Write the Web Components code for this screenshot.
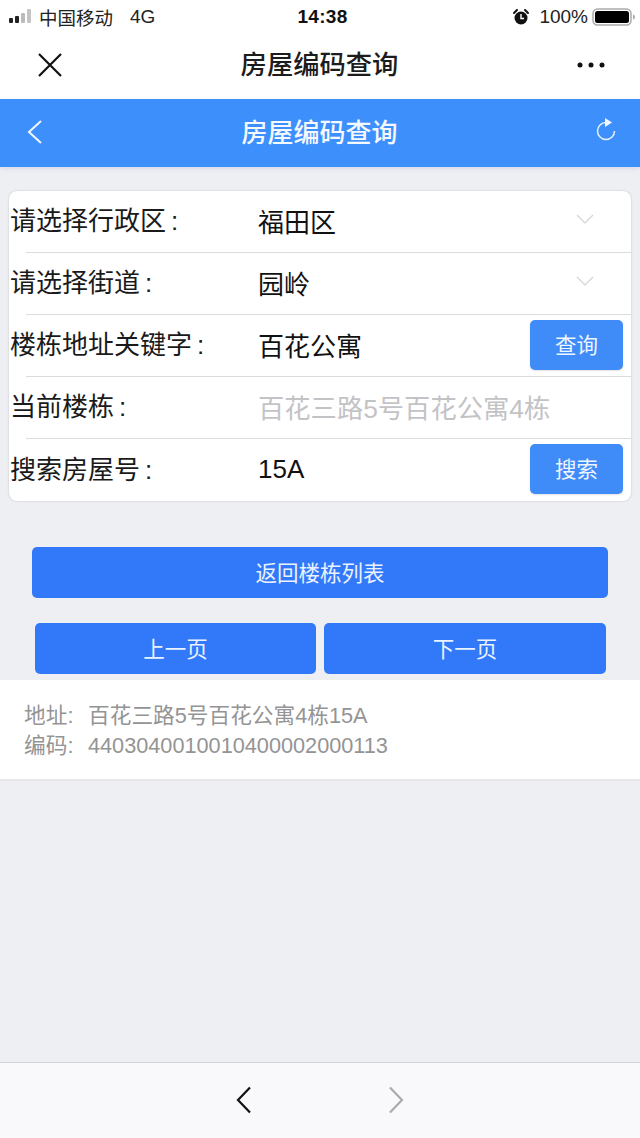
<!DOCTYPE html>
<html lang="zh">
<head>
<meta charset="utf-8">
<title>房屋编码查询</title>
<style>
html,body{margin:0;padding:0;}
body{width:640px;height:1138px;overflow:hidden;background:#eeeff2;font-family:"Liberation Sans","Noto Sans CJK SC",sans-serif;}
#page{display:flex;flex-direction:column;height:1138px;}
</style>
</head>
<body>
<div id="page">
  <status-bar></status-bar>
  <wx-nav>房屋编码查询</wx-nav>
  <app-header>房屋编码查询</app-header>
  <form-card>
    <field-row label="请选择行政区" value="福田区" arrow></field-row>
    <field-row label="请选择街道" value="园岭" arrow></field-row>
    <field-row label="楼栋地址关键字" value="百花公寓" button="查询"></field-row>
    <field-row label="当前楼栋" value="百花三路5号百花公寓4栋" muted></field-row>
    <field-row label="搜索房屋号" value="15A" button="搜索" last></field-row>
  </form-card>
  <page-actions></page-actions>
  <info-panel>
    <info-line label="地址">百花三路5号百花公寓4栋15A</info-line>
    <info-line label="编码">4403040010010400002000113</info-line>
  </info-panel>
  <browser-bar></browser-bar>
</div>
<script>
class StatusBar extends HTMLElement{
    connectedCallback(){
        this.attachShadow({mode:"open"}).innerHTML=`
        <style>
        :host{display:flex;align-items:center;justify-content:space-between;height:32px;background:#fff;color:#222;font-size:18px;box-sizing:border-box;padding:1px 4px 0 9px;}
        .left,.right{display:flex;align-items:center;width:200px;}
        .right{justify-content:flex-end;}
        .net{margin-left:17px;font-size:19px;}
        .time{font-weight:bold;font-size:19px;letter-spacing:.3px;color:#111;}
        svg{display:block;}
        .carrier{margin-left:4px;font-size:18.500px;}
        .pct{margin:0 4px 0 9px;font-size:19px;}
        </style>
        <div class="left">
            <svg width="26" height="18" viewBox="0 0 26 18">
                <rect x="0" y="10" width="4" height="5" rx="1" fill="#222"/>
                <rect x="6" y="8" width="4" height="7" rx="1" fill="#222"/>
                <rect x="12" y="5" width="4" height="10" rx="1" fill="#bbb"/>
                <rect x="18" y="1" width="4" height="14" rx="1" fill="#c4c4c4"/>
            </svg>
            <span class="carrier">中国移动</span><span class="net">4G</span>
        </div>
        <div class="time">14:38</div>
        <div class="right">
            <svg width="18" height="18" viewBox="0 0 18 18">
                <circle cx="9" cy="10" r="6.500" fill="#111"/>
                <path d="M9 6v4.500h3" fill="none" stroke="#fff" stroke-width="1.400"/>
                <path d="M2 5l3-3M16 5l-3-3" stroke="#111" stroke-width="2" stroke-linecap="round"/>
            </svg>
            <span class="pct">100%</span>
            <svg width="44" height="20" viewBox="0 0 44 20">
                <rect x="1" y="2" width="38" height="16" rx="4.500" fill="none" stroke="#aaa" stroke-width="1.500"/>
                <rect x="3" y="4" width="34" height="12" rx="2.500" fill="#000"/>
                <path d="M41 7.500c1.500.4 2 1.300 2 2.500s-.5 2.100-2 2.500z" fill="#aaa"/>
            </svg>
        </div>`;
    }
}

class WxNav extends HTMLElement{
    connectedCallback(){
        this.attachShadow({mode:"open"}).innerHTML=`
        <style>
        :host{display:flex;align-items:center;justify-content:space-between;height:67px;background:#fff;padding:0 34px 2px 37px;box-sizing:border-box;}
        .title{font-size:26.300px;font-weight:500;color:#1c1c1c;position:relative;top:-2px;}
        svg{display:block;}
        </style>
        <svg width="26" height="26" viewBox="0 0 26 26"><path d="M2 2l22 22M24 2L2 24" stroke="#111" stroke-width="2.200" fill="none"/></svg>
        <div class="title"><slot></slot></div>
        <svg width="30" height="8" viewBox="0 0 30 8"><circle cx="4" cy="4" r="2.500" fill="#111"/><circle cx="15" cy="4" r="2.500" fill="#111"/><circle cx="26" cy="4" r="2.500" fill="#111"/></svg>`;
    }
}

class AppHeader extends HTMLElement{
    connectedCallback(){
        this.attachShadow({mode:"open"}).innerHTML=`
        <style>
        :host{display:flex;align-items:center;justify-content:space-between;height:68px;background:#3d8ffb;color:#fff;padding:0 23px 0 26px;box-sizing:border-box;box-shadow:0 2px 4px rgba(120,140,190,.18);}
        .title{font-size:26px;font-weight:500;color:#f4f8ff;position:relative;top:-3px;}
        svg{display:block;}
        .back{position:relative;top:-1px;}
        .reload{position:relative;top:-3px;}
        </style>
        <svg class="back" width="18" height="28" viewBox="0 0 18 28"><path d="M15 3L3 14l12 11" fill="none" stroke="#f2f6ff" stroke-width="2"/></svg>
        <div class="title"><slot></slot></div>
        <svg class="reload" width="22" height="26" viewBox="0 0 22 26">
            <path d="M11 5.500a8.500 8.500 0 1 0 8.500 8.500" fill="none" stroke="#e8f1ff" stroke-width="1.500"/>
            <path d="M10 1l7 4.500-7 4.500z" fill="#f2f6ff"/>
        </svg>`;
    }
}

class FormCard extends HTMLElement{
    connectedCallback(){
        this.attachShadow({mode:"open"}).innerHTML=`
        <style>
        :host{display:block;margin:24px 9px 0;background:#fff;border-radius:8px;box-shadow:0 0 2px rgba(0,0,0,.22);}
        </style>
        <slot></slot>`;
    }
}

class FieldRow extends HTMLElement{
    connectedCallback(){
        const button=this.getAttribute("button");
        const trailing=button
            ?`<button>${button}</button>`
            :this.hasAttribute("arrow")
                ?`<svg class="arrow" width="18" height="11" viewBox="0 0 18 11"><path d="M1 1l8 8 8-8" fill="none" stroke="#d4d4d8" stroke-width="1.200"/></svg>`
                :"";
        this.attachShadow({mode:"open"}).innerHTML=`
        <style>
        :host{display:block;}
        .row{display:flex;align-items:center;height:61px;box-sizing:border-box;padding:0 8px 0 1px;}
        :host([last]) .row{height:62px;}
        .divider{height:1px;background:#dcdcdf;margin-left:17px;}
        .label{width:248px;font-size:26px;color:#1a1a1a;position:relative;top:-3px;white-space:nowrap;}
        .label i{font-style:normal;margin-left:5px;}
        .value{flex:1;font-size:26px;color:#111;white-space:nowrap;position:relative;top:-1px;}
        :host([muted]) .value{color:#c3c3c6;font-size:26.300px;}
        .arrow{display:block;margin-right:29px;position:relative;top:-2px;}
        button{width:93px;height:50px;margin-top:-2px;border:0;border-radius:5px;background:#3f8bf8;color:#eef5ff;font:21.500px "Liberation Sans","Noto Sans CJK SC",sans-serif;padding:0 0 3px;box-shadow:0 1px 2px rgba(0,0,0,.12);}
        </style>
        <div class="row">
            <div class="label">${this.getAttribute("label")}<i>:</i></div>
            <div class="value">${this.getAttribute("value")}</div>
            ${trailing}
        </div>
        ${this.hasAttribute("last")?"":'<div class="divider"></div>'}`;
    }
}

class PageActions extends HTMLElement{
    connectedCallback(){
        this.attachShadow({mode:"open"}).innerHTML=`
        <style>
        :host{display:block;padding:46px 32px 6px;}
        button{border:0;border-radius:5px;background:#3279fa;color:#eaf2ff;font:21.500px "Liberation Sans","Noto Sans CJK SC",sans-serif;height:51px;padding:0 0 2px;}
        .back{display:block;width:576px;}
        .pager{display:flex;gap:8px;margin:25px 2px 0 3px;}
        .pager button{width:281px;}
        .pager button:last-child{width:282px;}
        </style>
        <button class="back">返回楼栋列表</button>
        <div class="pager"><button>上一页</button><button>下一页</button></div>`;
    }
}

class InfoPanel extends HTMLElement{
    connectedCallback(){
        this.attachShadow({mode:"open"}).innerHTML=`
        <style>
        :host{display:block;background:#fff;color:#949494;font-size:21.700px;line-height:30px;padding:21px 24px 18px;border-bottom:2px solid #e6e6e9;}
        </style>
        <slot></slot>`;
    }
}

class InfoLine extends HTMLElement{
    connectedCallback(){
        this.attachShadow({mode:"open"}).innerHTML=`
        <style>
        :host{display:flex;}
        .key{width:64px;white-space:nowrap;}
        </style>
        <div class="key">${this.getAttribute("label")}:</div><div><slot></slot></div>`;
    }
}

class BrowserBar extends HTMLElement{
    connectedCallback(){
        this.attachShadow({mode:"open"}).innerHTML=`
        <style>
        :host{display:flex;align-items:center;justify-content:center;gap:136px;margin-top:auto;height:76px;box-sizing:border-box;background:#f9f9fc;border-top:1px solid #d2d2d6;padding-bottom:2px;}
        svg{display:block;}
        </style>
        <svg width="16" height="28" viewBox="0 0 16 28"><path d="M14 1.500L2 14l12 12.500" fill="none" stroke="#111" stroke-width="2.200"/></svg>
        <svg width="16" height="28" viewBox="0 0 16 28"><path d="M2 1.500L14 14 2 26.500" fill="none" stroke="#ababaf" stroke-width="2.200"/></svg>`;
    }
}

customElements.define("status-bar",StatusBar);
customElements.define("wx-nav",WxNav);
customElements.define("app-header",AppHeader);
customElements.define("form-card",FormCard);
customElements.define("field-row",FieldRow);
customElements.define("page-actions",PageActions);
customElements.define("info-panel",InfoPanel);
customElements.define("info-line",InfoLine);
customElements.define("browser-bar",BrowserBar);
</script>
</body>
</html>
